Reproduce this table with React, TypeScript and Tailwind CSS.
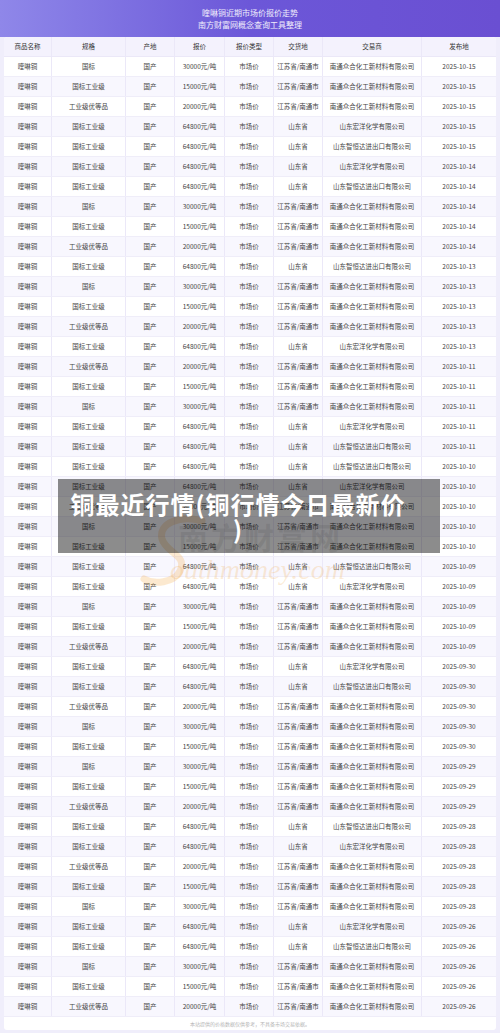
import React from "react";

type Row = [string, string, string, string];

const SPECS: Record<string, [string, string]> = {
  a: ["国标", "30000元/吨"],
  b: ["国标工业级", "15000元/吨"],
  c: ["工业级优等品", "20000元/吨"],
  h: ["国标工业级", "64800元/吨"],
  z: ["国标工业级", "64800元/吨"],
};

const seq: [string, string][] = [
  ["a", "10-15"], ["b", "10-15"], ["c", "10-15"], ["h", "10-15"], ["z", "10-15"],
  ["h", "10-14"], ["z", "10-14"], ["a", "10-14"], ["b", "10-14"], ["c", "10-14"],
  ["z", "10-13"], ["a", "10-13"], ["b", "10-13"], ["c", "10-13"], ["h", "10-13"],
  ["c", "10-11"], ["b", "10-11"], ["a", "10-11"], ["h", "10-11"], ["z", "10-11"],
  ["z", "10-10"], ["h", "10-10"], ["c", "10-10"], ["a", "10-10"], ["b", "10-10"],
  ["z", "10-09"], ["h", "10-09"], ["a", "10-09"], ["b", "10-09"], ["c", "10-09"],
  ["h", "09-30"], ["z", "09-30"], ["c", "09-30"], ["a", "09-30"], ["b", "09-30"],
  ["a", "09-29"], ["b", "09-29"], ["c", "09-29"],
  ["z", "09-28"], ["h", "09-28"], ["c", "09-28"], ["b", "09-28"], ["a", "09-28"],
  ["h", "09-26"], ["z", "09-26"], ["a", "09-26"], ["b", "09-26"], ["c", "09-26"],
];

const rows: Row[] = seq.map(([k, d]) => {
  const [spec, price] = SPECS[k];
  const sd = k === "h" || k === "z";
  const place = sd ? "山东省" : "江苏省/南通市";
  const firm =
    k === "h" ? "山东宏洋化学有限公司" : k === "z" ? "山东智恒达进出口有限公司" : "南通众合化工新材料有限公司";
  return [spec, price, place + "|" + firm, "2025-" + d];
});

const heads = ["商品名称", "规格", "产地", "报价", "报价类型", "交货地", "交易商", "发布地"];
const widths = ["w-[48px]", "w-[74px]", "w-[49px]", "w-[50px]", "w-[49px]", "w-[49px]", "w-[99px]", "w-[74px]"];

const Cell = ({ i, children }: { i: number; children: React.ReactNode }) => (
  <div
    className={`${widths[i]} shrink-0 flex items-center justify-center whitespace-nowrap ${
      i < 7 ? "border-r border-[#ebe8f8]" : ""
    }`}
  >
    {children}
  </div>
);

export default function App() {
  return (
    <div
      className="relative w-[500px] h-[1033px] overflow-hidden bg-[#f0eefb] text-[#444]"
      style={{ fontFamily: '"Noto Sans CJK SC", "Noto Sans", sans-serif' }}
    >
      <div className="h-[37px] bg-gradient-to-r from-[#8f87e9] via-[#6c57d8] to-[#6a4fd2] pt-[7px] text-center text-[8px] leading-[12px] text-white/90">
        <div>喹啉铜近期市场价报价走势</div>
        <div>南方财富网概念查询工具整理</div>
      </div>

      <div className="mx-[4px] rounded-t-[4px] rounded-b-[3px] bg-white text-[6.5px] overflow-hidden">
        <div className="flex h-[20px] bg-[#f4f2fd] border-b border-[#ebe8f8] text-[#333]">
          {heads.map((h, i) => (
            <Cell key={h} i={i}>
              {h}
            </Cell>
          ))}
        </div>
        {rows.map((r, n) => {
          const [place, firm] = r[2].split("|");
          return (
            <div
              key={n}
              className={`flex h-[20px] border-b border-[#efedf9] ${n % 2 ? "bg-[#f8f7fe]" : "bg-white"}`}
            >
              <Cell i={0}>喹啉铜</Cell>
              <Cell i={1}>{r[0]}</Cell>
              <Cell i={2}>国产</Cell>
              <Cell i={3}>{r[1]}</Cell>
              <Cell i={4}>市场价</Cell>
              <Cell i={5}>{place}</Cell>
              <Cell i={6}>{firm}</Cell>
              <Cell i={7}>{r[3]}</Cell>
            </div>
          );
        })}
        <div className="h-[13px] flex items-center justify-center text-[5px] text-[#b5b5b5]">
          本站提供的价格数据仅供参考，不具备市场交易依据。
        </div>
      </div>

      {/* watermark */}
      <div className="absolute left-[140px] top-[515px] w-[210px] h-[75px] pointer-events-none">
        <svg className="absolute left-0 top-0" width="70" height="75" viewBox="0 0 70 75">
          <path
            d="M62 6 C40 0 18 8 22 24 C26 38 48 40 40 56 C34 68 14 70 4 64"
            fill="none"
            stroke="#f4a640"
            strokeOpacity="0.25"
            strokeWidth="7"
            strokeLinecap="round"
          />
        </svg>
        <div className="absolute left-[38px] top-[6px] text-[30px] leading-[30px] font-bold tracking-[3px] text-[#9a9a9a]/20">
          南方财富网
        </div>
        <div
          className="absolute left-[30px] top-[40px] text-[28px] leading-[30px] italic text-[#f2b25c]/25"
          style={{ fontFamily: '"Liberation Serif", serif' }}
        >
          outhmoney.com
        </div>
      </div>

      {/* title overlay */}
      <div className="absolute left-[58px] top-[479px] w-[382px] h-[74px] bg-black/45 flex items-center justify-center pr-[22px]">
        <div className="text-center text-white font-bold text-[24px] leading-[25px] tracking-[1px]">
          铜最近行情(铜行情今日最新价
          <br />)
        </div>
      </div>
    </div>
  );
}
